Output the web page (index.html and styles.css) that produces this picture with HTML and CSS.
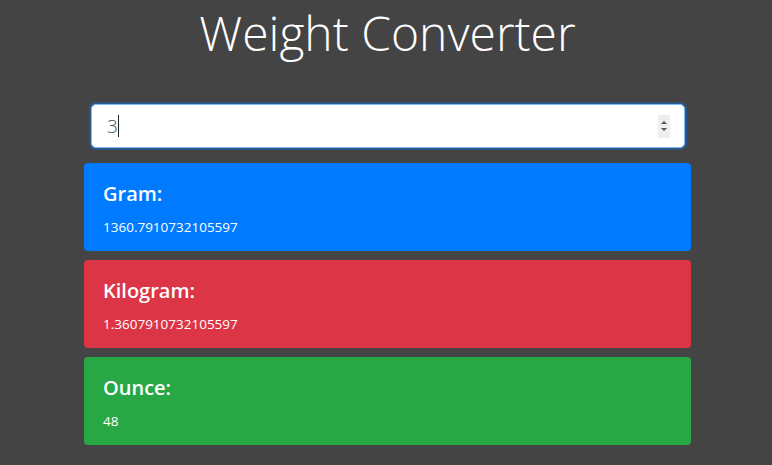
FILE: index.html
```html
<!DOCTYPE html>
<html lang="en">
<head>
<meta charset="utf-8">
<title>Weight Converter</title>
<link rel="stylesheet" href="styles.css">
</head>
<body>
<main class="page">
  <h1 class="title">Weight Converter</h1>
  <div class="field">
    <div class="field-input">
      <span class="field-value">3</span><span class="caret"></span>
    </div>
    <div class="spinner">
      <span class="tri up"></span>
      <span class="tri down"></span>
    </div>
  </div>
  <section class="cards">
    <div class="card card-blue">
      <h5 class="card-title">Gram:</h5>
      <div class="card-text">1360.7910732105597</div>
    </div>
    <div class="card card-red">
      <h5 class="card-title">Kilogram:</h5>
      <div class="card-text">1.3607910732105597</div>
    </div>
    <div class="card card-green">
      <h5 class="card-title">Ounce:</h5>
      <div class="card-text">48</div>
    </div>
  </section>
</main>
</body>
</html>
```

FILE: styles.css
```css
html, body {
  margin: 0;
  padding: 0;
  background: #444444;
  height: 100%;
}
body {
  font-family: "Open Sans", "Noto Sans", sans-serif;
  color: #fff;
}
.page {
  width: 607px;
  margin: 0 auto 0 84px;
  display: flex;
  flex-direction: column;
}
.title {
  margin: 0;
  padding-top: 4px;
  font-size: 48px;
  font-weight: 300;
  line-height: 57px;
  text-align: center;
  color: #fff;
}
.field {
  margin: 43px 6px 0 7px;
  height: 42px;
  background: #fff;
  border: 1px solid #80bdff;
  border-radius: 5px;
  box-shadow: 0 0 0 2px rgba(0, 123, 255, 0.35);
  display: flex;
  align-items: center;
  padding: 0 14px 0 15px;
}
.field-input {
  flex: 1;
  display: flex;
  align-items: center;
}
.field-value {
  font-size: 19px;
  font-weight: 300;
  color: #495057;
  line-height: 24px;
}
.caret {
  width: 1px;
  height: 22px;
  background: #222;
  margin-left: 0;
}
.spinner {
  width: 12px;
  height: 23px;
  background: #eeeeee;
  display: flex;
  flex-direction: column;
  align-items: center;
  justify-content: center;
  gap: 4px;
}
.tri {
  width: 0;
  height: 0;
  border-left: 3px solid transparent;
  border-right: 3px solid transparent;
}
.tri.up { border-bottom: 3px solid #555; }
.tri.down { border-top: 3px solid #555; }
.cards {
  margin-top: 15px;
  display: flex;
  flex-direction: column;
  gap: 9px;
}
.card {
  height: 88px;
  box-sizing: border-box;
  border-radius: 4px;
  padding: 19px 19px 0 19px;
}
.card-blue { background: #007bff; }
.card-red { background: #dc3545; }
.card-green { background: #28a745; }
.card-title {
  margin: 0 0 11px 0;
  font-size: 20px;
  font-weight: 600;
  line-height: 24px;
}
.card-text {
  font-size: 13.5px;
  line-height: 20px;
}
```
